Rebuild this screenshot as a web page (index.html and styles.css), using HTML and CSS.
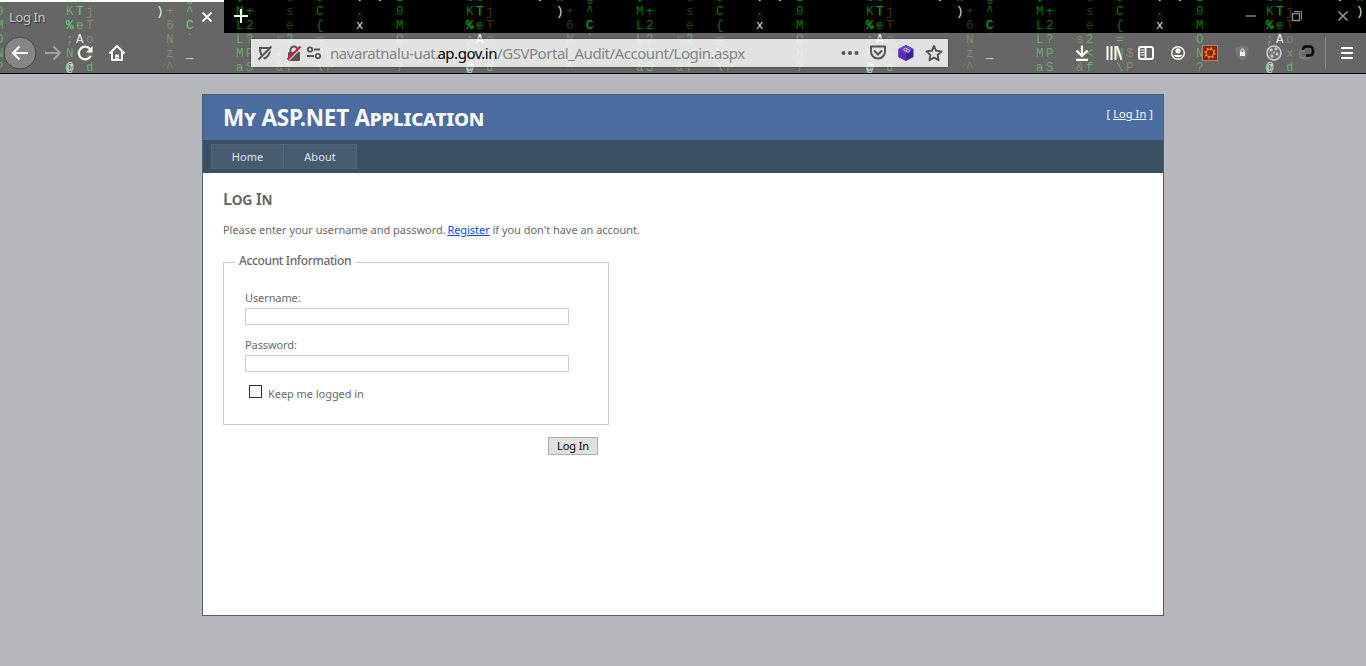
FILE: index.html
```html
<!DOCTYPE html>
<html lang="en">
<head>
<meta charset="utf-8">
<title>Log In</title>
<link rel="stylesheet" href="styles.css">
</head>
<body>
<div class="browser">
  <svg class="matrix" width="1366" height="73" aria-hidden="true">
    <defs>
      <g id="tile">
        <g class="green">
          <text x="66 76 186 236 246 316" y="1">tcg$=e</text><text x="156 -4" y="1">w2</text>
          <text x="66 76 186 236 246 316 -4" y="15">KT^M+C0</text>
          <text x="66 76 186 236 246 316 -4" y="29">%eCL2{M</text>
          <text x="66 186 236 246 286 316 -4" y="43">;`L?2=O</text>
          <text x="66 236 246 286 316 -4" y="57">NMP&lt;NN</text>
          <text x="86 236 246 286 316 -4" y="71">daSf\?</text>
        </g>
        <g class="bright"><text x="76" y="15">T</text><text x="66 186" y="29">%C</text><text x="356" y="15">.</text></g>
        <g class="olive">
          <text x="286" y="1">s</text>
          <text x="86 166 286" y="15">j+s</text>
          <text x="86 166 286" y="29">T6e</text>
          <text x="86 166 276" y="43">oNs</text>
          <text x="86 166 276 326" y="57">xz4$</text>
          <text x="166 276 326" y="71">^&amp;P</text>
        </g>
        <g class="white">
          <text x="136 356 376" y="1">...</text>
          <text x="156" y="15">)</text><text x="356" y="29">x</text>
          <text x="76" y="43">A</text><text x="186" y="57">_</text><text x="66" y="71">@</text>
        </g>
      </g>
    </defs>
    <use href="#tile"/><use href="#tile" x="400"/><use href="#tile" x="800"/><use href="#tile" x="1200"/>
  </svg>
  <div class="tabs">
    <div class="tab"><span>Log In</span><svg width="14" height="14"><path d="M2.500 2.500l9 9m0-9l-9 9" stroke="#f4fff0" stroke-width="1.800"/></svg></div>
    <svg class="plus" width="32" height="33"><path d="M17 9v14M10 16h14" stroke="#f4fff0" stroke-width="2"/></svg>
    <div class="win">
      <svg width="46" height="33"><path d="M18 16h10" stroke="#888" stroke-width="1.400"/></svg>
      <svg width="46" height="33" fill="none" stroke="#888"><path d="M18.500 13.500h7v7h-7z" stroke-width="1.500"/><path d="M20 11.500h7.500v8"/></svg>
      <svg width="46" height="33"><path d="M18.500 11.500l9 9m0-9l-9 9" stroke="#999" stroke-width="1.600"/></svg>
    </div>
  </div>
  <div class="toolbar">
    <svg class="back" width="34" height="34"><circle cx="17" cy="17" r="16" fill="#858585" stroke="#444"/><path d="M25 17H10m6.500-6.500L10 17l6.500 6.500" fill="none" stroke="#f4fff0" stroke-width="2.200"/></svg>
    <svg width="32" height="32" fill="none" stroke="#a0a59e" stroke-width="2"><path d="M8 16h15m-6.500-6.500L23 16l-6.500 6.500"/></svg>
    <svg width="32" height="32"><path d="M21 12a6.300 6.300 0 1 0 .7 7" fill="none" stroke="#f4fff0" stroke-width="2.200"/><path d="M23.500 9v6.500H17z" fill="#f4fff0"/></svg>
    <svg width="32" height="32" fill="none" stroke="#f4fff0" stroke-width="2"><path d="M8.500 16.500L16 9l7.500 7.500M11 15v8h10v-8" stroke-linejoin="round"/><path d="M16 23v-5.500" stroke-width="3.500"/><path d="M16 20v1" stroke="#666" stroke-width="1.400"/></svg>
    <div class="url">
      <svg width="28" height="28" fill="none" stroke="#555"><path d="M9 9h10c0 5-1 8-5 10.500-4-2.500-5-5.500-5-10.500z" stroke-width="2"/><path d="M15 12v3" stroke-width="2"/><path d="M8.500 21.500L21.500 8.500" stroke="#e0e0e0" stroke-width="1.500"/><path d="M7.500 20.500L20.500 7.500" stroke-width="2"/></svg>
      <svg class="lock" width="24" height="28"><path d="M8.500 14v-3a3.500 3.500 0 0 1 7 0v3" fill="none" stroke="#555" stroke-width="2"/><rect x="6" y="13" width="12" height="9" rx="1" fill="#555"/><path d="M6.500 21.500L19.500 8.500" stroke="#e0e0e0" stroke-width="1.500"/><path d="M5.500 20.500L18.500 7.500" stroke="#f0103c" stroke-width="2.200"/></svg>
      <svg class="perm" width="22" height="28" fill="none" stroke="#555" stroke-width="1.800"><circle cx="6" cy="10.500" r="2.200"/><path d="M10 10.500h6M3 17h7"/><circle cx="14" cy="17" r="2.200"/></svg>
      <span class="address">navaratnalu-uat.<b>ap.gov.in</b>/GSVPortal_Audit/Account/Login.aspx</span>
      <svg width="28" height="28" fill="#555"><circle cx="7.500" cy="14" r="2"/><circle cx="14" cy="14" r="2"/><circle cx="20.500" cy="14" r="2"/></svg>
      <svg width="28" height="28" fill="none" stroke="#555" stroke-width="2"><path d="M7 7.500h14v5a7 7 0 0 1-14 0z" stroke-linejoin="round"/><path d="M10.500 12l3.500 3.500 3.500-3.500" stroke-linecap="round"/></svg>
      <svg width="28" height="28"><path d="M14 6l7.500 4v8L14 22l-7.500-4v-8z" fill="#45209a"/><path d="M14 6l7.500 4-7.500 5-7.500-5z" fill="#7440c8"/><path d="M6.500 10l7.500 5v7l-7.500-4z" fill="#5a2db5"/><ellipse cx="13.500" cy="10.500" rx="1.700" ry="1.300" fill="none" stroke="#ccc"/><ellipse cx="16" cy="11.800" rx="1.700" ry="1.300" fill="none" stroke="#ccc"/></svg>
      <svg width="28" height="28"><path d="M14 7l2.200 4.800 5.300.6-3.900 3.600 1 5.200-4.600-2.600-4.600 2.600 1-5.200-3.900-3.600 5.300-.6z" fill="none" stroke="#555" stroke-width="1.900" stroke-linejoin="round"/></svg>
    </div>
    <div class="tools">
      <svg width="32" height="32" fill="none" stroke="#f4fff0" stroke-width="2.200"><path d="M16 8.500v10m-5.500-5l5.500 5.500 5.500-5.500M10 22.800h12"/></svg>
      <svg width="32" height="32" fill="none" stroke="#f4fff0" stroke-width="2"><path d="M9.500 9v14M13.500 9v14M17.500 9v14M19 9l4.500 14"/></svg>
      <svg width="32" height="32" fill="none" stroke="#f4fff0" stroke-width="2"><rect x="9" y="10" width="14" height="12" rx="2"/><path d="M15.500 10v12"/><path d="M10.500 13h3.500m-3.500 2.500h3.500m-3.500 2.500h3.500" stroke-width="1"/></svg>
      <svg width="32" height="32"><circle cx="16" cy="16" r="6.300" fill="none" stroke="#f4fff0" stroke-width="1.400"/><circle cx="16" cy="13.800" r="2.600" fill="#f4fff0"/><path d="M11.500 18h9c-1 3-8 3-9 0z" fill="#f4fff0"/></svg>
      <svg width="32" height="32"><rect x="8.500" y="8.500" width="15" height="15" fill="#8f2300" stroke="#a38678"/><circle cx="16" cy="16" r="3.800" fill="none" stroke="#f29427" stroke-width="1.200"/><circle cx="16" cy="16" r="5" fill="none" stroke="#f29427" stroke-width="1.500" stroke-dasharray="1.600 2.320"/></svg>
      <svg width="32" height="32"><path d="M16 9l6 2c0 6-1 10-6 12-5-2-6-6-6-12z" fill="#777" stroke="#7c7c7c"/><rect x="14" y="15" width="5" height="4" fill="#fff"/><path d="M15 15v-1.500a1.500 1.500 0 0 1 3 0V15" fill="none" stroke="#fff"/></svg>
      <svg width="32" height="32"><circle cx="16" cy="16" r="7" fill="#777" fill-opacity=".5" stroke="#ccc" stroke-width="1.600"/><g fill="#ccc"><circle cx="13" cy="13" r="1.500"/><circle cx="18" cy="12" r="1.400"/><circle cx="19" cy="17" r="1.500"/><circle cx="14" cy="19" r="1.600"/><circle cx="16" cy="15.500" r="1"/></g></svg>
      <svg width="32" height="32" fill="none" stroke-width="2.600"><path d="M15 14h-2a3.500 3.500 0 0 0-3 3.500c0 2 1 3.500 3 3.500h4c2 0 3-1 3-3" stroke="#7c7c7c"/><path d="M13 13c0-2 1-3.500 3-3.500h3.500c2 0 3.500 1.500 3.500 3.500v2c0 2-1.500 3.500-3.500 3.500H16" stroke="#080808"/></svg>
    </div>
    <svg class="menu" width="32" height="32" stroke="#f4fff0" stroke-width="2"><path d="M10 11h12M10 16h12M10 21h12"/></svg>
  </div>
</div>
<div class="page">
  <header class="header">
    <h1>My ASP.NET Application</h1>
    <div class="login">[ <a href="#">Log In</a> ]</div>
  </header>
  <nav class="nav"><a class="home">Home</a><a class="about">About</a></nav>
  <main class="main">
    <h2>Log In</h2>
    <p class="intro">Please enter your username and password. <a href="#">Register</a> if you don't have an account.</p>
    <form class="form">
      <fieldset>
        <legend>Account Information</legend>
        <label for="user">Username:</label>
        <input class="entry" id="user" type="text">
        <label for="pass">Password:</label>
        <input class="entry" id="pass" type="password">
        <div class="keep"><input id="keep" type="checkbox"><label for="keep">Keep me logged in</label></div>
      </fieldset>
      <button type="button">Log In</button>
    </form>
  </main>
</div>
</body>
</html>
```

FILE: styles.css
```css
* { box-sizing: border-box; }
body { margin: 0; height: 666px; overflow: hidden; background: #b6b7bc; font-family: "Noto Sans", sans-serif; font-size: 11px; color: #696969; }
svg { display: block; flex: none; }
.browser { position: relative; height: 74px; background: #000; overflow: hidden; }
.matrix { position: absolute; left: 0; top: 0; font-family: "Liberation Mono", monospace; font-size: 12.5px; }
.green { fill: #007c00; }
.bright { fill: #00a500; }
.olive { fill: #403600; }
.white { fill: #d8e8d0; }
.tabs { position: relative; display: flex; height: 33px; }
.tab { width: 224px; border-top: 2px solid #f0fff0; background: rgba(255,255,255,.4); display: flex; align-items: center; justify-content: space-between; padding: 0 10px 1px 9px; color: #c4c8c2; font-size: 13px; letter-spacing: -.4px; text-shadow: 1px 1px 1px #333; }
.win { display: flex; margin-left: auto; }
.toolbar { position: relative; display: flex; align-items: center; height: 40px; background: rgba(255,255,255,.4); padding-left: 3px; }
.url { display: flex; align-items: center; width: 697px; height: 28px; margin-left: 118px; background: rgba(255,255,255,.81); box-shadow: 0 0 2px #333; }
.lock { margin-left: 3px; }
.perm { margin-left: -2px; }
.address { flex: 1; margin-left: 4px; font-size: 15px; letter-spacing: -.46px; color: #858585; white-space: nowrap; }
.address b { font-weight: 400; color: #000; margin-left: -1.500px; }
.tools { display: flex; margin-left: 118px; }
.menu { width: 41px; padding-left: 5px; margin-left: 3px; border-left: 1px solid #888; }

.page { width: 962px; height: 522px; margin: 20px 0 0 202px; background: #fff; border: 1px solid #496077; }
.header { display: flex; justify-content: space-between; height: 45px; background: #4b6c9e; color: #fff; padding: 0 10px 0 20px; }
h1 { margin: 0; font-size: 22.5px; line-height: 45px; letter-spacing: -.25px; font-variant: small-caps; color: #f9f9f9; }
.login { line-height: 37px; letter-spacing: .1px; }
.login a { color: #fff; }
.nav { display: flex; height: 33px; background: #3a4f63; padding: 4px 8px; }
.nav a { height: 25px; line-height: 24px; border: 1px solid #4e667d; background: #465c71; color: #dde4ec; text-align: center; letter-spacing: .1px; }
.home { width: 73px; }
.about { width: 74px; margin-left: -1px; }
.main { padding: 15px 20px; }
h2 { margin: 0; font-size: 16.5px; line-height: 22px; padding-bottom: 2px; font-weight: 600; letter-spacing: -.35px; font-variant: small-caps; color: #666; }
.intro { margin: 10px 0 15px; line-height: 16px; letter-spacing: -.03px; word-spacing: 0; white-space: nowrap; }
.intro a { color: #034af3; letter-spacing: -.05px; margin-left: -1px; }
.form { width: 386px; }
fieldset { height: 174px; margin: -2px 0 0; padding: 16px 21px 0; border: 1px solid #ccc; min-width: 0; }
legend { margin-left: -10px; padding: 0 4px; font-size: 12px; line-height: 19px; height: 23px; letter-spacing: -.37px; font-weight: 500; }
fieldset label { display: block; line-height: 16px; letter-spacing: -.1px; }
.entry { display: block; width: 324px; height: 17px; margin: 2px 0 12px; border: 1px solid #ccc; padding: 0; }
.keep { display: flex; padding-left: 4px; margin-top: 13px; }
.keep input { appearance: none; width: 13px; height: 13px; margin: 0 6px 0 0; border: 1px solid #333; background: #fff; }
.keep label { letter-spacing: -.05px; padding-top: 1px; }
button { display: block; width: 50px; height: 18px; margin: 12px 11px 0 auto; padding: 0; border: 1px solid #adadad; background: #e1e1e1; font: 11px/14px "Noto Sans", sans-serif; letter-spacing: -.1px; color: #000; }
```
